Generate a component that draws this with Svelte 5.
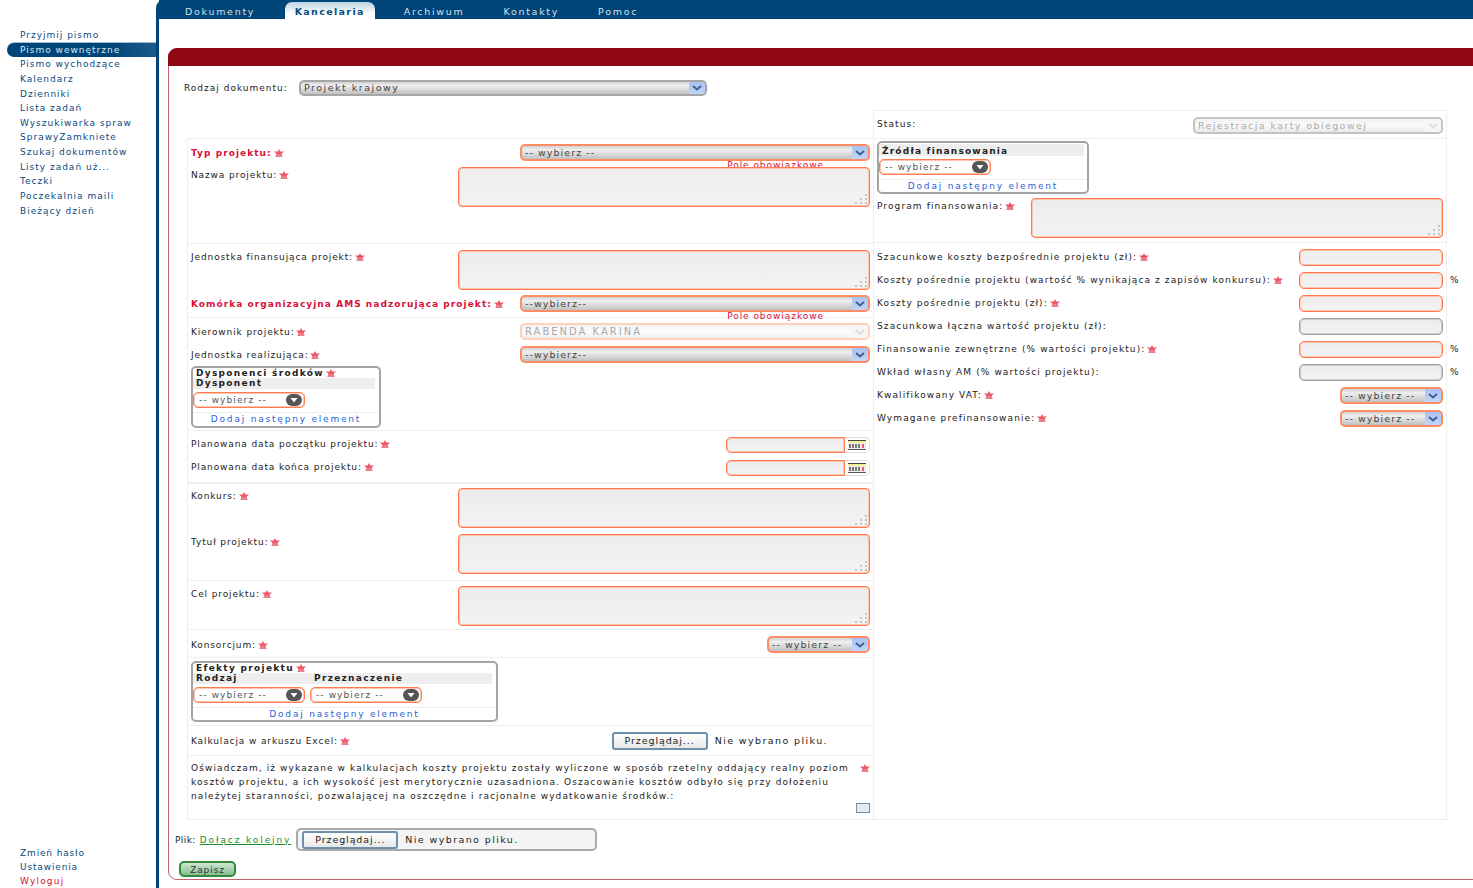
<script>
  const menu = ['Przyjmij pismo','Pismo wewnętrzne','Pismo wychodzące','Kalendarz','Dzienniki','Lista zadań','Wyszukiwarka spraw','SprawyZamkniete','Szukaj dokumentów','Listy zadań uż...','Teczki','Poczekalnia maili','Bieżący dzień'];
  const tabs = ['Dokumenty','Kancelaria','Archiwum','Kontakty','Pomoc'];
  const costs = [
    { label: 'Szacunkowe koszty bezpośrednie projektu (zł):', star: true },
    { label: 'Koszty pośrednie projektu (wartość % wynikająca z zapisów konkursu):', star: true, pct: true },
    { label: 'Koszty pośrednie projektu (zł):', star: true },
    { label: 'Szacunkowa łączna wartość projektu (zł):', gray: true },
    { label: 'Finansowanie zewnętrzne (% wartości projektu):', star: true, pct: true },
    { label: 'Wkład własny AM (% wartości projektu):', gray: true, pct: true }
  ];
</script>

{#snippet star()}
  <svg class="star" viewBox="0 0 10 8" width="10" height="8"><path d="M5 0 6.3 2.5 10 2.6 7.6 4.7 8.4 8H1.6L2.4 4.7 0 2.6 3.7 2.5Z" fill="#f0566a"/><path d="M2.2 5H7.8L8.4 8H1.6Z" fill="#e8808c"/></svg>
{/snippet}

{#snippet dots()}
  <svg class="dots" viewBox="0 0 14 12" width="14" height="12"><g fill="#c4c4c4"><rect x="11" y="0" width="2" height="2"/><rect x="11" y="4" width="2" height="2"/><rect x="11" y="8" width="2" height="2"/><rect x="6" y="4" width="2" height="2"/><rect x="6" y="8" width="2" height="2"/><rect x="1" y="8" width="2" height="2"/></g></svg>
{/snippet}

{#snippet chevron()}
  <span class="arrow"><svg viewBox="0 0 10 6" width="10" height="6"><path d="M1 1 5 4.5 9 1" fill="none" stroke="#40608f" stroke-width="2"/></svg></span>
{/snippet}

{#snippet mini()}
  <div class="mini"><span>-- wybierz --</span><svg viewBox="0 0 16 12" width="16" height="12"><rect width="16" height="12" rx="6" fill="#555"/><path d="M4.5 4H11.5L8 8.5Z" fill="#fff"/></svg></div>
{/snippet}

{#snippet cal()}
  <span class="cal"><svg viewBox="0 0 18 10" width="18" height="10"><rect width="18" height="1" fill="#444"/><rect y="1" width="18" height="2" fill="#f4ee9a"/><rect y="3" width="18" height="7" fill="#eee"/><g fill="#777"><rect x="1" y="4" width="2" height="4"/><rect x="4" y="4" width="2" height="4"/><rect x="7" y="4" width="2" height="4"/><rect x="10" y="4" width="2" height="4"/></g><rect x="14" y="4" width="2" height="4" fill="#f0566a"/><rect y="9" width="18" height="1" fill="#555"/></svg></span>
{/snippet}

<div class="page">
  <aside class="side">
    <nav class="menu">
      {#each menu as m, i}
        <a class:active={i === 1} href="#x">{m}</a>
      {/each}
    </nav>
    <nav class="foot">
      <a href="#x">Zmień hasło</a>
      <a href="#x">Ustawienia</a>
      <a class="out" href="#x">Wyloguj</a>
    </nav>
  </aside>

  <main class="main">
    <header class="tabs">
      {#each tabs as t, i}
        <span class="tab" class:on={i === 1}>{t}</span>
      {/each}
    </header>

    <section class="card">
      <div class="bar"></div>
      <div class="kind">
        <span class="lbl">Rodzaj dokumentu:</span>
        <div class="sel grayb w408"><span>Projekt krajowy</span>{@render chevron()}</div>
      </div>

      <div class="cols">
        <div class="left">
          <div class="sec s1">
            <div class="row">
              <span class="lbl req">Typ projektu: {@render star()}</span>
              <div class="sel w350"><span>-- wybierz --</span>{@render chevron()}</div>
              <em class="err">Pole obowiązkowe</em>
            </div>
            <div class="row top">
              <span class="lbl">Nazwa projektu: {@render star()}</span>
              <div class="area w412">{@render dots()}</div>
            </div>
          </div>
          <div class="sec s2">
            <div class="row top">
              <span class="lbl">Jednostka finansująca projekt: {@render star()}</span>
              <div class="area w412">{@render dots()}</div>
            </div>
            <div class="row">
              <span class="lbl req">Komórka organizacyjna AMS nadzorująca projekt: {@render star()}</span>
              <div class="sel w350"><span>--wybierz--</span>{@render chevron()}</div>
              <em class="err">Pole obowiązkowe</em>
            </div>
          </div>
          <div class="sec s3">
            <div class="row">
              <span class="lbl">Kierownik projektu: {@render star()}</span>
              <div class="sel w350 off"><span>RABENDA KARINA</span><span class="arrow blank"><svg viewBox="0 0 10 6" width="10" height="6"><path d="M1 1 5 4.5 9 1" fill="none" stroke="#ddd" stroke-width="2"/></svg></span></div>
            </div>
            <div class="row">
              <span class="lbl">Jednostka realizująca: {@render star()}</span>
              <div class="sel w350"><span>--wybierz--</span>{@render chevron()}</div>
            </div>
            <div class="box w190">
              <div class="cap">Dysponenci środków {@render star()}</div>
              <div class="head w182"><b>Dysponent</b></div>
              <div class="pick">{@render mini()}</div>
              <a class="add" href="#x">Dodaj następny element</a>
            </div>
          </div>
          <div class="sec s4">
            <div class="row">
              <span class="lbl">Planowana data początku projektu: {@render star()}</span>
              <div class="date"><i></i>{@render cal()}</div>
            </div>
            <div class="row">
              <span class="lbl">Planowana data końca projektu: {@render star()}</span>
              <div class="date"><i></i>{@render cal()}</div>
            </div>
          </div>
          <div class="sec s5">
            <div class="row top">
              <span class="lbl">Konkurs: {@render star()}</span>
              <div class="area w412">{@render dots()}</div>
            </div>
            <div class="row top">
              <span class="lbl">Tytuł projektu: {@render star()}</span>
              <div class="area w412">{@render dots()}</div>
            </div>
          </div>
          <div class="sec s6">
            <div class="row top">
              <span class="lbl">Cel projektu: {@render star()}</span>
              <div class="area w412">{@render dots()}</div>
            </div>
          </div>
          <div class="sec s7">
            <div class="row">
              <span class="lbl">Konsorcjum: {@render star()}</span>
              <div class="sel w103"><span>-- wybierz --</span>{@render chevron()}</div>
            </div>
          </div>
          <div class="sec s8">
            <div class="box w307">
              <div class="cap">Efekty projektu {@render star()}</div>
              <div class="head w299"><b class="c1">Rodzaj</b><b>Przeznaczenie</b></div>
              <div class="pick">{@render mini()}{@render mini()}</div>
              <a class="add" href="#x">Dodaj następny element</a>
            </div>
          </div>
          <div class="sec s9">
            <div class="row">
              <span class="lbl">Kalkulacja w arkuszu Excel: {@render star()}</span>
              <div class="upload"><button type="button">Przeglądaj...</button><span>Nie wybrano pliku.</span></div>
            </div>
          </div>
          <div class="sec s10">
            <p class="lbl stmt">Oświadczam, iż wykazane w kalkulacjach koszty projektu zostały wyliczone w sposób rzetelny oddający realny poziom kosztów projektu, a ich wysokość jest merytorycznie uzasadniona. Oszacowanie kosztów odbyło się przy dołożeniu należytej staranności, pozwalającej na oszczędne i racjonalne wydatkowanie środków.:</p>
            <div class="tick">{@render star()}<i class="check"></i></div>
          </div>
        </div>

        <div class="right">
          <div class="sec r1">
            <div class="row">
              <span class="lbl">Status:</span>
              <div class="sel w250 stat"><span>Rejestracja karty obiegowej</span><span class="arrow blank"><svg viewBox="0 0 10 6" width="10" height="6"><path d="M1 1 5 4.5 9 1" fill="none" stroke="#ddd" stroke-width="2"/></svg></span></div>
            </div>
          </div>
          <div class="sec r2">
            <div class="box w211">
              <div class="head w205 cap2"><b>Źródła finansowania</b></div>
              <div class="pick">{@render mini()}</div>
              <a class="add" href="#x">Dodaj następny element</a>
            </div>
            <div class="row top">
              <span class="lbl">Program finansowania: {@render star()}</span>
              <div class="area w412">{@render dots()}</div>
            </div>
          </div>
          <div class="sec r3">
            {#each costs as c}
              <div class="row">
                <span class="lbl">{c.label} {#if c.star}{@render star()}{/if}</span>
                <div class="inp" class:gray={c.gray}>{#if c.pct}<span class="pct">%</span>{/if}</div>
              </div>
            {/each}
            <div class="row">
              <span class="lbl">Kwalifikowany VAT: {@render star()}</span>
              <div class="sel w103"><span>-- wybierz --</span>{@render chevron()}</div>
            </div>
            <div class="row">
              <span class="lbl">Wymagane prefinansowanie: {@render star()}</span>
              <div class="sel w103"><span>-- wybierz --</span>{@render chevron()}</div>
            </div>
          </div>
        </div>
      </div>

      <div class="files">
        <span class="lbl">Plik:</span>
        <a class="more" href="#x">Dołącz kolejny</a>
        <div class="upload framed"><button type="button">Przeglądaj...</button><span>Nie wybrano pliku.</span></div>
      </div>
      <button class="save" type="button">Zapisz</button>
    </section>
  </main>
</div>

<style>
  :global(body) { margin: 0; background: #fff; }
  .page { display: flex; width: 1473px; height: 888px; overflow: hidden; font: 9px/14px "DejaVu Sans", Verdana, sans-serif; letter-spacing: .72px; color: #222; }
  a { text-decoration: none; }

  .side { flex: 0 0 156px; display: flex; flex-direction: column; justify-content: space-between; padding: 28px 0 0; box-sizing: border-box; height: 888px; }
  .menu, .foot { display: flex; flex-direction: column; }
  .menu a, .foot a { color: #0a4a80; padding-left: 20px; height: 14.65px; line-height: 14.65px; white-space: nowrap; letter-spacing: 1px; }
  .menu a.active { margin-left: 7px; padding-left: 13px; color: #d8e6f2; border-radius: 8px 0 0 8px; background: linear-gradient(90deg, #004578 70%, #1d5c8d); box-shadow: 0 -1px 0 #9dbdd6; }
  .foot a { height: 14px; line-height: 14px; letter-spacing: .85px; }
  .foot a.out { color: #d8103a; letter-spacing: 1.2px; }

  .main { flex: 0 0 auto; width: 1317px; border-left: 3px solid #004578; border-top-left-radius: 8px; box-sizing: border-box; }
  .tabs { height: 19px; background: #004578; display: flex; align-items: flex-end; padding-left: 16px; gap: 19px; }
  .tab { color: #cfe0ee; height: 17px; line-height: 19px; padding: 0 10px; border-radius: 7px 7px 0 0; white-space: nowrap; letter-spacing: 1.7px; font-size: 9.5px; }
  .tab:first-child { margin-right: .5px; }
  .tab.on { color: #0b4a7e; font-weight: bold; letter-spacing: 1.35px; background: linear-gradient(#bcd2e2, #fff 70%); }

  .card { margin: 29px 0 0 9px; width: 1340px; height: 832px; box-sizing: border-box; border: 1px solid #c0606a; border-radius: 9px 0 0 9px; position: relative; }
  .bar { height: 18px; margin: -1px -1px 0; background: #8f0710; border-radius: 9px 0 0 0; }
  .kind { display: flex; align-items: center; padding: 14px 0 0 15px; gap: 15px; height: 15px; }
  .kind .lbl { width: 100px; letter-spacing: 1px; }

  .cols { display: grid; grid-template-columns: 686px 574px; margin: 15px 0 0 18px; width: 1261px; align-items: stretch; }
  .left { margin-top: 28px; border: 1px solid #eee; border-width: 1px 0 1px 1px; box-sizing: border-box; }
  .right { border: 1px solid #eee; box-sizing: border-box; }
  .left .lbl { letter-spacing: .88px; }
  .right .lbl { letter-spacing: 1.1px; }
  .left .lbl.req { letter-spacing: 1.05px; }

  .sec { display: flex; flex-direction: column; border-bottom: 1px solid #eee; padding-left: 3px; padding-right: 3px; box-sizing: border-box; }
  .s1 { padding-top: 5px; padding-bottom: 36px; gap: 6px; }
  .s2 { padding-top: 6px; padding-bottom: 5px; gap: 5px; }
  .s2 .row.top .lbl { margin-top: 0; }
  .s3 { padding-top: 5px; padding-bottom: 2px; gap: 6px; }
  .s3 .box { margin-top: -3px; }
  .s4 { padding-top: 6px; padding-bottom: 6px; gap: 7px; border-bottom-width: 2px; }
  .s4 .lbl { margin-top: -2px; }
  .s5 { padding-top: 4px; padding-bottom: 6px; gap: 6px; }
  .s6 { padding-top: 5px; padding-bottom: 3px; }
  .s7 { padding-top: 6px; padding-bottom: 4px; }
  .s8 { padding-top: 3px; padding-bottom: 3px; }
  .s9 { padding-top: 6px; padding-bottom: 5px; }
  .s10 { flex-direction: row; height: 63px; padding-top: 5px; border-bottom: 0; }
  .r1 { padding-top: 6px; padding-bottom: 4px; }
  .r1 .lbl { margin-top: -3px; }
  .r2 { padding-top: 2px; padding-bottom: 4px; gap: 4px; height: 104px; }
  .r3 { padding-top: 6px; gap: 6px; border-bottom: 0; }
  .r3 .lbl { margin-top: -2px; }

  .row { display: flex; justify-content: space-between; align-items: center; position: relative; }
  .row.top { align-items: flex-start; }
  .row.top .lbl { margin-top: 1px; }
  .lbl { white-space: nowrap; color: #222; }
  .lbl.req { color: #d8103a; font-weight: bold; }
  .star { vertical-align: -1px; margin-left: -2px; }
  .err { position: absolute; right: 46px; top: 16px; font-style: normal; color: #d8103a; line-height: 10px; white-space: nowrap; letter-spacing: .95px; }

  .sel { display: flex; align-items: center; justify-content: space-between; box-sizing: border-box; height: 17px; border: 2px solid #ff8c64; border-radius: 5px; background: linear-gradient(#d2d2d2, #efefef 30%, #c4c4c4 95%); padding-left: 3px; color: #444; overflow: hidden; white-space: nowrap; letter-spacing: 1.05px; font-size: 9.5px; }
  .grayb { border-color: #a6a6a6; height: 16px; letter-spacing: 1.5px; }
  .off { border-color: #ffd0bd; background: linear-gradient(#f2f2f2, #fcfcfc 50%, #efefef); color: #aaa; font-size: 10px; letter-spacing: 2px; }
  .stat { border-color: #c4c4c4; background: linear-gradient(#f2f2f2, #fafafa 50%, #e9e9e9); color: #aaa; letter-spacing: 1.4px; }
  .arrow { flex: 0 0 16px; align-self: stretch; display: flex; align-items: center; justify-content: center; background: linear-gradient(#a8c2f2, #c2d4f7); }
  .arrow.blank { background: #f6f6f6; }
  .w408 { width: 408px; }
  .w350 { width: 350px; }
  .w412 { width: 412px; }
  .w250 { width: 250px; }
  .w103 { width: 103px; }

  .area { position: relative; box-sizing: border-box; height: 40px; border: 1px solid #ff7a4d; box-shadow: inset 0 0 0 1px #ffc4ad; border-radius: 4px; background: linear-gradient(#ececec, #f3f3f3); }
  .dots { position: absolute; right: 1px; bottom: 0; }

  .date { display: flex; width: 144px; height: 16px; }
  .date i { flex: 1; box-sizing: border-box; border: 1px solid #ff7a4d; box-shadow: inset 0 0 0 1px #ffc4ad; border-radius: 5px 0 0 5px; background: linear-gradient(#ececec, #f3f3f3); }
  .cal { flex: 0 0 25px; box-sizing: border-box; display: flex; align-items: center; justify-content: center; border: 1px solid #ddd; border-left: 0; border-radius: 0 5px 5px 0; }

  .box { box-sizing: border-box; border: 2px solid #a4a4a4; border-radius: 5px; display: flex; flex-direction: column; }
  .w190 { width: 190px; height: 62px; }
  .w307 { width: 307px; height: 61px; }
  .w211 { width: 212px; height: 54px; }
  .cap { font-weight: bold; line-height: 10px; padding: 0 0 0 3px; height: 10px; letter-spacing: 1.3px; color: #222; }
  .head { background: #eee; height: 11px; line-height: 11px; padding-left: 3px; box-sizing: border-box; display: flex; letter-spacing: 1.3px; }
  .w182 { width: 182px; }
  .w299 { width: 299px; }
  .w205 { width: 205px; }
  .cap2 { margin-top: 1px; height: 12px; line-height: 14px; letter-spacing: 1.2px; }
  .c1 { width: 118px; }
  .pick { display: flex; gap: 5px; margin-top: 3px; padding-bottom: 4px; border-bottom: 1px solid #eee; }
  .mini { box-sizing: border-box; width: 112px; height: 16px; border: 1px solid #ff7a4d; box-shadow: inset 0 0 0 1px #ffc4ad; border-radius: 5px; display: flex; align-items: center; justify-content: space-between; padding: 0 2px 0 5px; color: #555; white-space: nowrap; letter-spacing: 1.1px; }
  .add { color: #2a62d8; text-align: center; line-height: 12px; letter-spacing: 1.8px; }

  .upload { display: flex; align-items: center; gap: 7px; margin-right: 42px; color: #222; letter-spacing: 1.4px; font-size: 9.5px; }
  .upload button, .save { font: inherit; letter-spacing: .9px; cursor: default; }
  .upload button { width: 96px; height: 18px; padding: 0; color: #222; background: linear-gradient(#fff, #e8e8e8); border: 2px solid #6f90ad; border-radius: 3px; }

  .left .lbl.stmt { margin: 0; width: 660px; white-space: normal; letter-spacing: 1.1px; }
  .tick { flex: 1; display: flex; flex-direction: column; align-items: flex-end; justify-content: space-between; padding: 3px 0 6px; }
  .check { display: block; width: 14px; height: 10px; box-sizing: border-box; border: 1px solid #6f90ad; background: #e6eaee; }

  .inp { box-sizing: border-box; width: 144px; height: 17px; border: 1px solid #ff7a4d; box-shadow: inset 0 0 0 1px #ffc4ad; border-radius: 5px; background: linear-gradient(#ececec, #f3f3f3); position: relative; }
  .inp.gray { border-color: #a0a0a0; box-shadow: inset 0 0 0 1px #ccc; }
  .pct { position: absolute; left: 150px; top: 0; }

  .files { display: flex; align-items: center; margin: 8px 0 0 6px; height: 23px; gap: 4px; }
  .files .lbl { letter-spacing: .4px; }
  .more { color: #1c8a28; text-decoration: underline; letter-spacing: 1.9px; margin-right: 1px; }
  .upload.framed { margin: 0; width: 301px; height: 23px; box-sizing: border-box; border: 2px solid #aaa; border-radius: 5px; background: #f4f4f4; padding-left: 4px; }
  .save { display: block; margin: 10px 0 0 10px; width: 57px; height: 16px; padding: 0; color: #333; border: 2px solid #2f8a3c; border-radius: 5px; background: linear-gradient(#cfe6d2, #84bd90); }
</style>
